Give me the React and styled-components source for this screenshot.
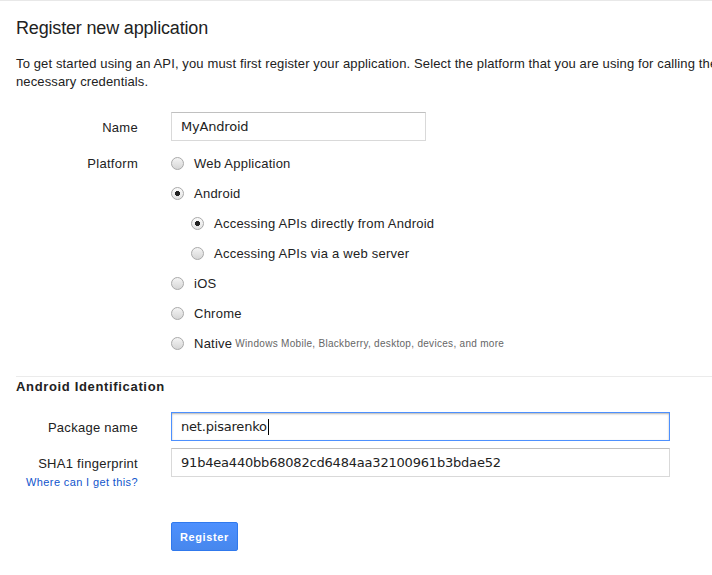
import React from "react";
import styled, { createGlobalStyle } from "styled-components";

const Global = createGlobalStyle`
  html, body { margin: 0; padding: 0; background: #fff; overflow: hidden; }
  body { font-family: "Liberation Sans", Arial, sans-serif; color: #222; }
`;

const Page = styled.div`
  width: 760px;
  border-top: 1px solid #e8e8e8;
  padding: 15px 0 0 16px;
  box-sizing: border-box;
`;

const Title = styled.h1`
  margin: 0;
  font-size: 18px;
  font-weight: normal;
  line-height: 24px;
  letter-spacing: -0.17px;
  color: #222;
`;

const Intro = styled.p`
  margin: 15px 0 0;
  width: 730px;
  font-size: 13px;
  line-height: 18px;
  letter-spacing: 0.13px;
  color: #222;
`;

const Form = styled.div`
  display: flex;
  flex-direction: column;
`;

const FieldRow = styled.div`
  display: grid;
  grid-template-columns: 122px auto;
  column-gap: 33px;
  align-items: start;
  margin-top: ${(p) => p.$top || 0}px;
`;

const Label = styled.div`
  text-align: right;
  font-size: 13px;
  line-height: ${(p) => p.$lh || 29}px;
  padding-top: 1px;
  letter-spacing: 0.28px;
  color: #222;
  white-space: nowrap;
`;

const HelpLink = styled.a`
  display: block;
  text-align: right;
  margin-top: -2px;
  font-size: 11px;
  line-height: 13px;
  letter-spacing: 0.38px;
  color: #15c;
  text-decoration: none;
  white-space: nowrap;
`;

const TextField = styled.div`
  box-sizing: border-box;
  width: ${(p) => p.$width}px;
  height: 29px;
  padding: 0 9px;
  display: flex;
  align-items: center;
  font-family: "DejaVu Sans", sans-serif;
  font-size: 13px;
  letter-spacing: -0.2px;
  color: #222;
  background: #fff;
  border: 1px solid ${(p) => (p.$focused ? "#4d90fe" : "#d9d9d9")};
  border-top-color: ${(p) => (p.$focused ? "#4d90fe" : "#c0c0c0")};
  box-shadow: ${(p) => (p.$focused ? "inset 0 1px 2px rgba(0,0,0,0.3)" : "none")};
`;

const Caret = styled.span`
  display: inline-block;
  width: 1px;
  height: 16px;
  background: #000;
  margin-left: 1px;
`;

const OptionList = styled.div`
  display: flex;
  flex-direction: column;
`;

const Option = styled.div`
  display: flex;
  align-items: center;
  height: 30px;
  padding-left: ${(p) => (p.$sub ? 20 : 0)}px;
  font-size: 13px;
  letter-spacing: 0.24px;
  color: #222;
`;

const Radio = styled.span`
  box-sizing: border-box;
  width: 13px;
  height: 13px;
  border-radius: 50%;
  border: 1px solid #a9a9a9;
  background: ${(p) =>
    p.$checked
      ? "radial-gradient(circle, #222 0 2.3px, transparent 2.8px), linear-gradient(#fbfbfb, #e2e2e2)"
      : "linear-gradient(#f4f4f4, #d6d6d6)"};
  margin-right: 10px;
  flex: none;
`;

const Hint = styled.span`
  font-size: 10px;
  letter-spacing: 0.3px;
  color: #666;
  margin-left: 3px;
`;

const Divider = styled.hr`
  margin: 18px 0 0;
  border: 0;
  border-top: 1px solid #ebebeb;
  height: 0;
`;

const SectionTitle = styled.h2`
  margin: 1px 0 0;
  font-size: 13px;
  line-height: 18px;
  font-weight: bold;
  letter-spacing: 0.66px;
  color: #222;
`;

const Button = styled.button`
  box-sizing: border-box;
  height: 29px;
  padding: 0 8px;
  font-family: "Liberation Sans", Arial, sans-serif;
  font-size: 11px;
  font-weight: bold;
  letter-spacing: 0.6px;
  color: #fff;
  border: 1px solid #3079ed;
  border-radius: 2px;
  background: linear-gradient(#4d90fe, #4787ed);
`;

const platforms = [
  { label: "Web Application" },
  { label: "Android", checked: true },
  { label: "Accessing APIs directly from Android", checked: true, sub: true },
  { label: "Accessing APIs via a web server", sub: true },
  { label: "iOS" },
  { label: "Chrome" },
  { label: "Native", hint: "Windows Mobile, Blackberry, desktop, devices, and more" },
];

export default function App() {
  return (
    <>
      <Global />
      <Page>
        <Title>Register new application</Title>
        <Intro>
          To get started using an API, you must first register your application. Select the platform that you are using for calling the necessary credentials.
        </Intro>
        <Form>
          <FieldRow $top={21}>
            <Label>Name</Label>
            <TextField $width={255}>MyAndroid</TextField>
          </FieldRow>
          <FieldRow $top={6}>
            <Label $lh={30}>Platform</Label>
            <OptionList>
              {platforms.map((p) => (
                <Option key={p.label} $sub={p.sub}>
                  <Radio $checked={p.checked} />
                  {p.label}
                  {p.hint && <Hint>{p.hint}</Hint>}
                </Option>
              ))}
            </OptionList>
          </FieldRow>
        </Form>
        <Divider />
        <SectionTitle>Android Identification</SectionTitle>
        <Form>
          <FieldRow $top={16}>
            <Label>Package name</Label>
            <TextField $width={499} $focused>
              net.pisarenko
              <Caret />
            </TextField>
          </FieldRow>
          <FieldRow $top={6}>
            <div>
              <Label>SHA1 fingerprint</Label>
              <HelpLink href="#">Where can I get this?</HelpLink>
            </div>
            <TextField $width={499}>91b4ea440bb68082cd6484aa32100961b3bdae52</TextField>
          </FieldRow>
          <FieldRow $top={33}>
            <div />
            <div>
              <Button>Register</Button>
            </div>
          </FieldRow>
        </Form>
      </Page>
    </>
  );
}
